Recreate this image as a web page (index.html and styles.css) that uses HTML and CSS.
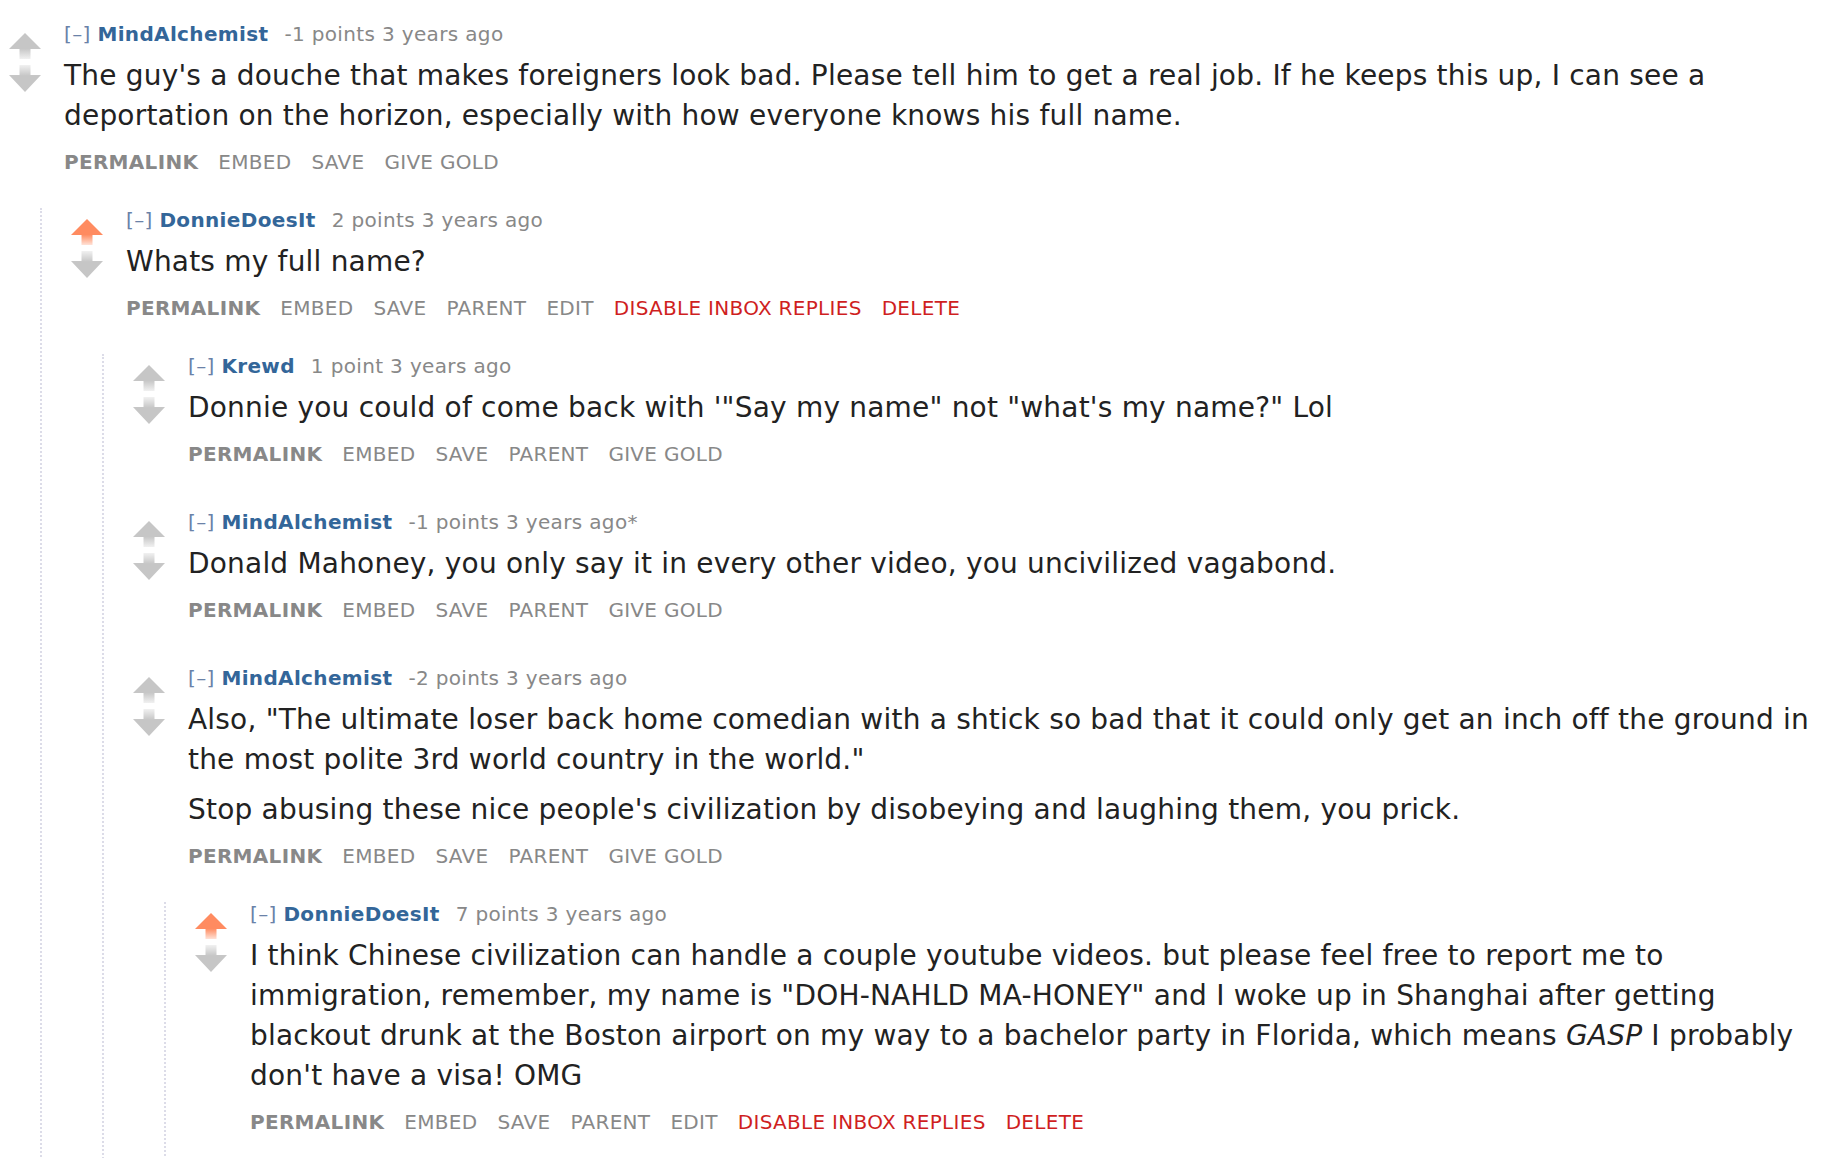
FILE: index.html
```html
<!DOCTYPE html>
<html lang="en">
<head>
<meta charset="utf-8">
<title>Comments</title>
<link rel="stylesheet" href="styles.css">
</head>
<body>
<svg class="defs" width="0" height="0" aria-hidden="true">
  <defs>
    <linearGradient id="gUpGray" x1="0" y1="0" x2="0" y2="1">
      <stop offset="0" stop-color="#c6c6c6"/>
      <stop offset="0.6" stop-color="#c6c6c6"/>
      <stop offset="1" stop-color="#c6c6c6" stop-opacity="0.25"/>
    </linearGradient>
    <linearGradient id="gUpOrange" x1="0" y1="0" x2="0" y2="1">
      <stop offset="0" stop-color="#ff8b60"/>
      <stop offset="0.6" stop-color="#ff8b60"/>
      <stop offset="1" stop-color="#ff8b60" stop-opacity="0.25"/>
    </linearGradient>
    <linearGradient id="gDownGray" x1="0" y1="0" x2="0" y2="1">
      <stop offset="0" stop-color="#c6c6c6" stop-opacity="0.25"/>
      <stop offset="0.4" stop-color="#c6c6c6"/>
      <stop offset="1" stop-color="#c6c6c6"/>
    </linearGradient>
  </defs>
</svg>

<div class="comment">
  <div class="thing">
    <div class="midcol">
      <svg class="arrow" viewBox="0 0 32 26" width="32" height="26"><polygon points="16,0 32,16 21.5,16 21.5,26 10.5,26 10.5,16 0,16" fill="url(#gUpGray)"/></svg>
      <svg class="arrow" viewBox="0 0 32 27" width="32" height="27"><polygon points="10.5,0 21.5,0 21.5,10 32,10 16,27 0,10 10.5,10" fill="url(#gDownGray)"/></svg>
    </div>
    <div class="entry">
      <p class="tagline"><span class="expand">[–]</span> <span class="author">MindAlchemist</span><span class="score">-1 points</span> <span class="time">3 years ago</span></p>
      <div class="md"><p>The guy's a douche that makes foreigners look bad. Please tell him to get a real job. If he keeps this up, I can see a deportation on the horizon, especially with how everyone knows his full name.</p></div>
      <ul class="buttons"><li class="bylink">permalink</li><li>embed</li><li>save</li><li>give gold</li></ul>
    </div>
  </div>
  <div class="child">
    <div class="comment">
      <div class="thing">
        <div class="midcol">
          <svg class="arrow" viewBox="0 0 32 26" width="32" height="26"><polygon points="16,0 32,16 21.5,16 21.5,26 10.5,26 10.5,16 0,16" fill="url(#gUpOrange)"/></svg>
          <svg class="arrow" viewBox="0 0 32 27" width="32" height="27"><polygon points="10.5,0 21.5,0 21.5,10 32,10 16,27 0,10 10.5,10" fill="url(#gDownGray)"/></svg>
        </div>
        <div class="entry">
          <p class="tagline"><span class="expand">[–]</span> <span class="author">DonnieDoesIt</span><span class="score">2 points</span> <span class="time">3 years ago</span></p>
          <div class="md"><p>Whats my full name?</p></div>
          <ul class="buttons"><li class="bylink">permalink</li><li>embed</li><li>save</li><li>parent</li><li>edit</li><li class="danger">disable inbox replies</li><li class="danger">delete</li></ul>
        </div>
      </div>
      <div class="child">
        <div class="comment">
          <div class="thing">
            <div class="midcol">
              <svg class="arrow" viewBox="0 0 32 26" width="32" height="26"><polygon points="16,0 32,16 21.5,16 21.5,26 10.5,26 10.5,16 0,16" fill="url(#gUpGray)"/></svg>
              <svg class="arrow" viewBox="0 0 32 27" width="32" height="27"><polygon points="10.5,0 21.5,0 21.5,10 32,10 16,27 0,10 10.5,10" fill="url(#gDownGray)"/></svg>
            </div>
            <div class="entry">
              <p class="tagline"><span class="expand">[–]</span> <span class="author">Krewd</span><span class="score">1 point</span> <span class="time">3 years ago</span></p>
              <div class="md"><p>Donnie you could of come back with '"Say my name" not "what's my name?" Lol</p></div>
              <ul class="buttons"><li class="bylink">permalink</li><li>embed</li><li>save</li><li>parent</li><li>give gold</li></ul>
            </div>
          </div>
        </div>
        <div class="comment">
          <div class="thing">
            <div class="midcol">
              <svg class="arrow" viewBox="0 0 32 26" width="32" height="26"><polygon points="16,0 32,16 21.5,16 21.5,26 10.5,26 10.5,16 0,16" fill="url(#gUpGray)"/></svg>
              <svg class="arrow" viewBox="0 0 32 27" width="32" height="27"><polygon points="10.5,0 21.5,0 21.5,10 32,10 16,27 0,10 10.5,10" fill="url(#gDownGray)"/></svg>
            </div>
            <div class="entry">
              <p class="tagline"><span class="expand">[–]</span> <span class="author">MindAlchemist</span><span class="score">-1 points</span> <span class="time">3 years ago</span>*</p>
              <div class="md"><p>Donald Mahoney, you only say it in every other video, you uncivilized vagabond.</p></div>
              <ul class="buttons"><li class="bylink">permalink</li><li>embed</li><li>save</li><li>parent</li><li>give gold</li></ul>
            </div>
          </div>
        </div>
        <div class="comment">
          <div class="thing">
            <div class="midcol">
              <svg class="arrow" viewBox="0 0 32 26" width="32" height="26"><polygon points="16,0 32,16 21.5,16 21.5,26 10.5,26 10.5,16 0,16" fill="url(#gUpGray)"/></svg>
              <svg class="arrow" viewBox="0 0 32 27" width="32" height="27"><polygon points="10.5,0 21.5,0 21.5,10 32,10 16,27 0,10 10.5,10" fill="url(#gDownGray)"/></svg>
            </div>
            <div class="entry">
              <p class="tagline"><span class="expand">[–]</span> <span class="author">MindAlchemist</span><span class="score">-2 points</span> <span class="time">3 years ago</span></p>
              <div class="md"><p>Also, "The ultimate loser back home comedian with a shtick so bad that it could only get an inch off the ground in the most polite 3rd world country in the world."</p><p>Stop abusing these nice people's civilization by disobeying and laughing them, you prick.</p></div>
              <ul class="buttons"><li class="bylink">permalink</li><li>embed</li><li>save</li><li>parent</li><li>give gold</li></ul>
            </div>
          </div>
          <div class="child">
            <div class="comment">
              <div class="thing">
                <div class="midcol">
                  <svg class="arrow" viewBox="0 0 32 26" width="32" height="26"><polygon points="16,0 32,16 21.5,16 21.5,26 10.5,26 10.5,16 0,16" fill="url(#gUpOrange)"/></svg>
                  <svg class="arrow" viewBox="0 0 32 27" width="32" height="27"><polygon points="10.5,0 21.5,0 21.5,10 32,10 16,27 0,10 10.5,10" fill="url(#gDownGray)"/></svg>
                </div>
                <div class="entry">
                  <p class="tagline"><span class="expand">[–]</span> <span class="author">DonnieDoesIt</span><span class="score">7 points</span> <span class="time">3 years ago</span></p>
                  <div class="md"><p>I think Chinese civilization can handle a couple youtube videos. but please feel free to report me to immigration, remember, my name is "DOH-NAHLD MA-HONEY" and I woke up in Shanghai after getting blackout drunk at the Boston airport on my way to a bachelor party in Florida, which means <em>GASP</em> I probably don't have a visa! OMG</p></div>
                  <ul class="buttons"><li class="bylink">permalink</li><li>embed</li><li>save</li><li>parent</li><li>edit</li><li class="danger">disable inbox replies</li><li class="danger">delete</li></ul>
                </div>
              </div>
            </div>
          </div>
        </div>
      </div>
    </div>
  </div>
</div>
</body>
</html>
```

FILE: styles.css
```css
* {
  box-sizing: border-box;
}

html, body {
  background: #ffffff;
}

body {
  margin: 0;
  padding: 22px 10px 0 0;
  font-family: "DejaVu Sans", Verdana, sans-serif;
  color: #222222;
}

.defs {
  position: absolute;
  width: 0;
  height: 0;
  overflow: hidden;
}

.comment + .comment {
  margin-top: 40px;
}

.thing {
  display: flex;
  align-items: flex-start;
}

.midcol {
  flex: none;
  width: 32px;
  margin: 0 23px 0 9px;
  padding-top: 11px;
  display: flex;
  flex-direction: column;
  gap: 6px;
}

.arrow {
  display: block;
}

.entry {
  flex: 1;
  min-width: 0;
}

.tagline {
  margin: 0;
  font-size: 20px;
  line-height: 24px;
  letter-spacing: 0.35px;
  color: #888888;
}

.expand {
  color: #6a82a8;
}

.author {
  color: #336699;
  font-weight: bold;
  margin-right: 16px;
}

.md p {
  margin: 10px 0;
  font-size: 28px;
  line-height: 40px;
  letter-spacing: 0.2px;
  color: #222222;
}

.buttons {
  list-style: none;
  margin: 0;
  padding: 0;
  display: flex;
  gap: 20px;
  font-size: 20px;
  line-height: 32px;
  letter-spacing: 0.3px;
  text-transform: uppercase;
  color: #888888;
}

.bylink {
  font-weight: bold;
}

.danger {
  color: #cf1f1f;
}

.child {
  margin: 30px 0 0 40px;
  border-left: 2px dotted #dcdce8;
  padding: 0 0 30px 20px;
}
```
